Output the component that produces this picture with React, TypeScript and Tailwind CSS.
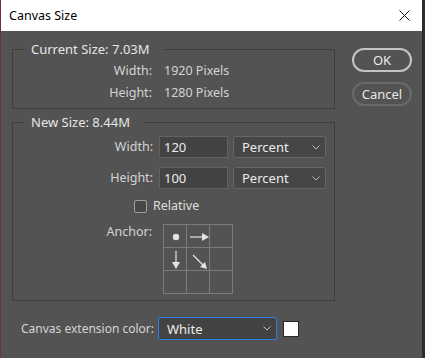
import { ReactNode } from "react";

const font = "font-['Noto_Sans',sans-serif]";

function Chevron() {
  return (
    <svg width="8" height="5" viewBox="0 0 8 5" className="shrink-0">
      <path d="M0.5 0.5L4 4L7.5 0.5" fill="none" stroke="#bdbdbd" strokeWidth="1" />
    </svg>
  );
}

function Select({
  value,
  className,
}: {
  value: string;
  className: string;
}) {
  return (
    <div
      className={`flex items-center justify-between pl-[8px] pr-[5px] text-[13px] text-[#ececec] ${className}`}
    >
      <span>{value}</span>
      <Chevron />
    </div>
  );
}

function Group({ legend, children }: { legend: string; children: ReactNode }) {
  return (
    <fieldset className="border border-[#3d3d3d]">
      <legend className="ml-[10px] pl-[8px] pr-[14px] text-[13px] leading-[16px] text-[#e6e6e6]">
        {legend}
      </legend>
      {children}
    </fieldset>
  );
}

function InfoRow({ label, value }: { label: string; value: string }) {
  return (
    <div className="flex items-center h-[22px]">
      <span className="w-[139px] text-right text-[#d4d4d4]">{label}</span>
      <span className="ml-[12px] text-[#d4d4d4]">{value}</span>
    </div>
  );
}

function SizeRow({ label, value }: { label: string; value: string }) {
  return (
    <div className="flex items-center">
      <span className="w-[140px] text-right text-[#d4d4d4]">{label}</span>
      <div className="ml-[6px] w-[69px] h-[22px] bg-[#434343] border border-[#626262] pl-[4px] flex items-center text-[13px] text-[#ececec]">
        {value}
      </div>
      <Select
        value="Percent"
        className="ml-[5px] w-[93px] h-[22px] bg-[#464646] border border-[#666666] rounded-[3px]"
      />
    </div>
  );
}

function AnchorGrid() {
  const cells = Array.from({ length: 9 });
  return (
    <div className="relative grid grid-cols-3 w-[70px] h-[70px] border-l border-t border-[#7c7c7c]">
      {cells.map((_, i) => (
        <div key={i} className="border-r border-b border-[#7c7c7c]" />
      ))}
      <svg
        width="70"
        height="70"
        viewBox="0 0 70 70"
        className="absolute left-0 top-0 pointer-events-none"
      >
        <circle cx="12" cy="12" r="3.2" fill="#e4e4e4" />
        <line x1="26" y1="12" x2="40" y2="12" stroke="#e4e4e4" strokeWidth="1.2" />
        <path d="M38 8L45 12L38 16Z" fill="#e4e4e4" />
        <line x1="12" y1="26" x2="12" y2="39" stroke="#e4e4e4" strokeWidth="1.2" />
        <path d="M8 37L12 44L16 37Z" fill="#e4e4e4" />
        <line x1="29" y1="30" x2="39" y2="40" stroke="#e4e4e4" strokeWidth="1.2" />
        <path d="M36 42L43 44L41 37Z" fill="#e4e4e4" />
      </svg>
    </div>
  );
}

export default function App() {
  return (
    <div className={`w-[425px] h-[358px] flex bg-[#2e2e2e] ${font} text-[12.5px] leading-[16px]`}>
      <div className="w-px bg-[#7a2b3e]" />
      <div className="w-[421px] flex flex-col bg-[#535353]">
        <div className="h-[31px] shrink-0 bg-white flex items-center justify-between pl-[8px] pr-[12px]">
          <span className="text-[12.5px] text-black">Canvas Size</span>
          <svg width="11" height="11" viewBox="0 0 11 11">
            <path d="M0.5 0.5L10.5 10.5M10.5 0.5L0.5 10.5" stroke="#111" strokeWidth="1" />
          </svg>
        </div>

        <div className="flex pl-[11px] pt-[10px]">
          <div className="w-[323px] flex flex-col">
            <Group legend="Current Size: 7.03M">
              <div className="pt-[3px] pb-[4px]">
                <InfoRow label="Width:" value="1920 Pixels" />
                <InfoRow label="Height:" value="1280 Pixels" />
              </div>
            </Group>

            <div className="mt-[5px]">
              <Group legend="New Size: 8.44M">
                <div className="pt-[6px] pb-[6px] flex flex-col">
                  <SizeRow label="Width:" value="120" />
                  <div className="mt-[9px]">
                    <SizeRow label="Height:" value="100" />
                  </div>
                  <div className="mt-[9px] flex items-center h-[16px]">
                    <div className="ml-[121px] w-[13px] h-[13px] rounded-[2px] border border-[#a0a0a0] bg-[#474747]" />
                    <span className="ml-[6px] text-[#dedede]">Relative</span>
                  </div>
                  <div className="mt-[10px] flex items-start">
                    <span className="w-[139px] text-right text-[#d4d4d4]">Anchor:</span>
                    <div className="ml-[11px]">
                      <AnchorGrid />
                    </div>
                  </div>
                </div>
              </Group>
            </div>

            <div className="mt-[16px] flex items-center">
              <span className="w-[146px] shrink-0 whitespace-nowrap pl-[9px] text-[12px] text-[#d4d4d4]">
                Canvas extension color:
              </span>
              <Select
                value="White"
                className="w-[119px] h-[23px] shrink-0 bg-[#434343] border border-[#2f7fe3] rounded-[2px]"
              />
              <div className="ml-[6px] w-[16px] h-[16px] shrink-0 bg-white border border-[#2a2a2a]" />
            </div>
          </div>

          <div className="ml-[17px] mt-[7px] flex flex-col">
            <button className="w-[60px] h-[24px] rounded-full border-2 border-[#c4c4c4] text-[13px] text-[#ececec]">
              OK
            </button>
            <button className="mt-[10px] w-[60px] h-[24px] rounded-full border-2 border-[#6a6a6a] text-[13px] text-[#e6e6e6]">
              Cancel
            </button>
          </div>
        </div>
      </div>
    </div>
  );
}
